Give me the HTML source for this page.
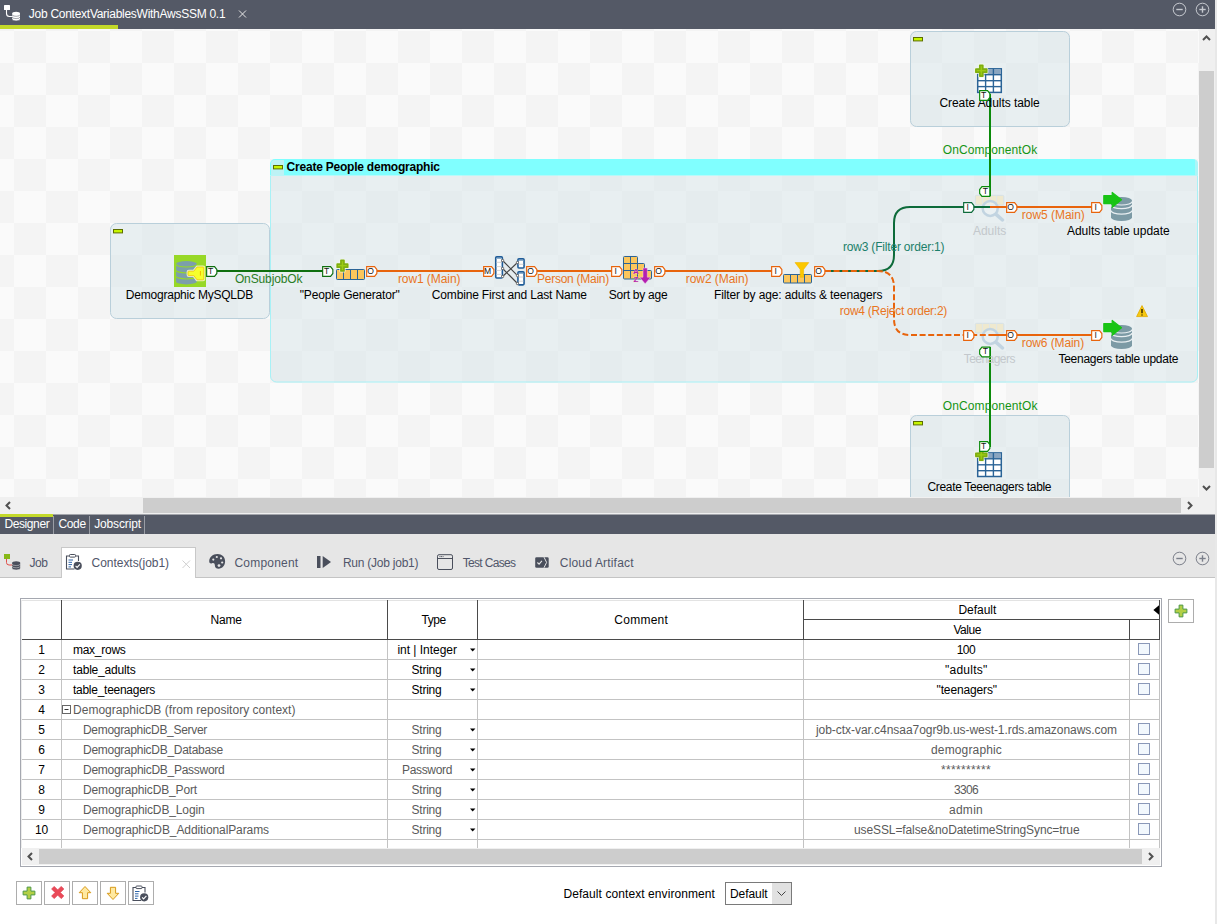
<!DOCTYPE html>
<html lang="en"><head><meta charset="utf-8"><title>Job ContextVariablesWithAwsSSM 0.1</title>
<style>
html,body{margin:0;padding:0}
body{width:1217px;height:924px;overflow:hidden;position:relative;background:#e6e6e6;font-family:"Liberation Sans", sans-serif;font-size:12px}
.t{position:absolute;white-space:pre;font-family:"Liberation Sans", sans-serif}
.abs{position:absolute}
svg{position:absolute;overflow:hidden}
svg text{font-family:"Liberation Sans", sans-serif;font-size:12px}
</style></head><body>
<div class="abs" style="left:0;top:0;width:1215px;height:29px;background:#545966"></div><div class="abs" style="left:0;top:25px;width:118px;height:4px;background:#c3d92a"></div><svg style="left:0;top:0" width="1215" height="25" viewBox="0 0 1215 25"><rect x="4" y="5" width="6" height="5" rx=".6" fill="#fff"/><path d="M6.500,10v3.500q0,3 3,3h3" stroke="#fff" stroke-width="1.1" fill="none"/><path d="M12.200,13.500v5.800a3.900,1.700 0 0 0 7.800,0v-5.800z" fill="#fff"/><ellipse cx="16.100" cy="13.500" rx="3.900" ry="1.700" fill="#fff"/><path d="M12.200,14.600a3.900,1.700 0 0 0 7.800,0M12.200,16.900a3.900,1.700 0 0 0 7.800,0M12.200,19.100a3.900,1.700 0 0 0 7.800,0" stroke="#545966" stroke-width=".7" fill="none" opacity=".75"/><path d="M239,10.500l7,7M246,10.500l-7,7" stroke="#e8e8e8" stroke-width="1"/><circle cx="1179.5" cy="9.5" r="6.3" fill="none" stroke="#c6c9cf" stroke-width="1"/><path d="M1176.3,9.5h6.4" stroke="#c6c9cf" stroke-width="1.4"/><circle cx="1202.5" cy="9.5" r="6.3" fill="none" stroke="#c6c9cf" stroke-width="1"/><path d="M1199.3,9.5h6.4" stroke="#c6c9cf" stroke-width="1.4"/><path d="M1202.5,6.3v6.4" stroke="#c6c9cf" stroke-width="1.4"/></svg><span class="t" style="left:28.8px;top:8.14px;font-size:12px;line-height:12px;color:#fff;font-weight:normal;letter-spacing:-0.269px;">Job ContextVariablesWithAwsSSM 0.1</span><svg style="left:0;top:29px" width="1199" height="468" viewBox="0 29 1199 468">
<defs><pattern id="chk" x="14" y="31" width="64" height="64" patternUnits="userSpaceOnUse"><rect width="64" height="64" fill="#fafafa"/><rect width="32" height="32" fill="#f4f4f4"/><rect x="32" y="32" width="32" height="32" fill="#f4f4f4"/></pattern></defs>
<rect x="0" y="29" width="1199" height="468" fill="url(#chk)"/>
<rect x="110.5" y="223.5" width="159" height="95" rx="6" ry="6" fill="rgba(216,229,234,.55)" stroke="#b9cfda" stroke-width="1"/>
<rect x="910.5" y="31.5" width="159" height="95" rx="6" ry="6" fill="rgba(216,229,234,.55)" stroke="#b9cfda" stroke-width="1"/>
<rect x="910.5" y="415.5" width="159" height="105" rx="6" ry="6" fill="rgba(216,229,234,.55)" stroke="#b9cfda" stroke-width="1"/>
<path d="M270,175.600V376a6.500,6.500 0 0 0 6.500,6.500H1191.5a6.500,6.500 0 0 0 6.500,-6.500V175.600z" fill="rgba(216,229,234,.55)"/>
<path d="M270.5,176V376a6,6 0 0 0 6,6H1191.5a6,6 0 0 0 6,-6V176" fill="none" stroke="#a8f1f6" stroke-width="1"/>
<path d="M270,175.600V164a5,5 0 0 1 5,-5H1193a5,5 0 0 1 5,5V175.600z" fill="#80ffff"/>
<path d="M271,175.600V164a4,4 0 0 1 4,-4H284V175.600z" fill="#bdf2f5"/><path d="M1195,160h.500a2.500,5 0 0 1 2.500,5V176h-3z" fill="#bdf2f5" opacity=".7"/>
<rect x="273.5" y="165.5" width="9" height="3.4" fill="#c6f500" stroke="#5d6e00" stroke-width="1"/>
<text x="286.6" y="171.2" textLength="153.4" lengthAdjust="spacing" fill="#000" font-weight="bold" >Create People demographic</text>
<rect x="113.5" y="229.5" width="9" height="3.4" fill="#c6f500" stroke="#5d6e00" stroke-width="1"/>
<rect x="913.5" y="37.5" width="9" height="3.4" fill="#c6f500" stroke="#5d6e00" stroke-width="1"/>
<rect x="913.5" y="421.5" width="9" height="3.4" fill="#c6f500" stroke="#5d6e00" stroke-width="1"/>
<g opacity=".5"><rect x="975.3" y="195.4" width="28.500" height="9.600" rx="1" fill="#f6e4ae" stroke="#c3d2dc" stroke-width=".9"/><path d="M982.4,195.4v9.600" stroke="#d5dfe5" stroke-width=".9"/><path d="M989.5,195.4v9.600" stroke="#d5dfe5" stroke-width=".9"/><path d="M996.5999999999999,195.4v9.600" stroke="#d5dfe5" stroke-width=".9"/><circle cx="990.1999999999999" cy="208.4" r="7.500" fill="#f2f7fa" fill-opacity=".55" stroke="#9dbbd3" stroke-width="2.500"/><path d="M996.0999999999999,214.4l6.400,5.600" stroke="#9dbbd3" stroke-width="3.400" stroke-linecap="round"/></g>
<g opacity=".5"><rect x="975.3" y="323.4" width="28.500" height="9.600" rx="1" fill="#f6e4ae" stroke="#c3d2dc" stroke-width=".9"/><path d="M982.4,323.4v9.600" stroke="#d5dfe5" stroke-width=".9"/><path d="M989.5,323.4v9.600" stroke="#d5dfe5" stroke-width=".9"/><path d="M996.5999999999999,323.4v9.600" stroke="#d5dfe5" stroke-width=".9"/><circle cx="990.1999999999999" cy="336.4" r="7.500" fill="#f2f7fa" fill-opacity=".55" stroke="#9dbbd3" stroke-width="2.500"/><path d="M996.0999999999999,342.4l6.400,5.600" stroke="#9dbbd3" stroke-width="3.400" stroke-linecap="round"/></g>
<path d="M217,271H323" stroke="#0f6f0f" stroke-width="2" fill="none"/>
<path d="M377,271H484M537,271H612M665,271H772" stroke="#e8640c" stroke-width="2" fill="none"/>
<path d="M825,271H878Q894,271 894,255V223Q894,207 910,207H990" stroke="#0d6b3a" stroke-width="2" fill="none"/>
<path d="M825,271H878Q894,271 894,287V319Q894,335 910,335H990" stroke="#e8640c" stroke-width="2" fill="none" stroke-dasharray="6,2.600"/>
<path d="M990,207H1092" stroke="#e8640c" stroke-width="2" fill="none"/>
<path d="M990,335H1092" stroke="#e8640c" stroke-width="2" fill="none"/>
<path d="M990,94V196" stroke="#0b8a0b" stroke-width="2" fill="none"/>
<path d="M990,347V447" stroke="#0b8a0b" stroke-width="2" fill="none"/>
<rect x="174" y="255" width="32" height="32" fill="#97d827"/>
<ellipse cx="186.45" cy="263.800" rx="10.35" ry="2.7" fill="#7c9faa"/>
<path d="M176.1,264.9a10.35,2.7 0 0 0 20.7,0v4.800a10.35,2.7 0 0 1 -20.7,0z" fill="#7c9faa"/>
<path d="M176.1,270.9a10.35,2.7 0 0 0 20.7,0v4.800a10.35,2.7 0 0 1 -20.7,0z" fill="#7c9faa"/>
<path d="M176.1,276.9a10.35,2.7 0 0 0 20.7,0v4.800a10.35,2.7 0 0 1 -20.7,0z" fill="#7c9faa"/>
<path d="M188.800,271.200h5l3.200,-4.200h6.200a.6,.6 0 0 1 .6,.6v11.600a.6,.6 0 0 1 -.6,.6h-6.200l-3.200,-4.200h-5a.8,.8 0 0 1 -.8,-.8v-2.800a.8,.8 0 0 1 .8,-.8z" fill="none" stroke="#fbffd8" stroke-width="2.800" stroke-linejoin="round" opacity=".8"/>
<path d="M188.800,271.200h5l3.200,-4.200h6.200a.6,.6 0 0 1 .6,.6v11.600a.6,.6 0 0 1 -.6,.6h-6.200l-3.200,-4.200h-5a.8,.8 0 0 1 -.8,-.8v-2.800a.8,.8 0 0 1 .8,-.8z" fill="#f6ff2c" stroke="#f3c400" stroke-width=".8" stroke-linejoin="round"/>
<path d="M200.400,271v4.600" stroke="#f0b800" stroke-width="1"/>
<rect x="336.5" y="269.5" width="28" height="10" rx=".8" fill="#fbc65c" stroke="#2b6497" stroke-width="1"/><path d="M343.5,269.5v10" stroke="#2b6497" stroke-width="1"/><path d="M350.5,269.5v10" stroke="#2b6497" stroke-width="1"/><path d="M357.5,269.5v10" stroke="#2b6497" stroke-width="1"/>
<path d="M340.95,260.4h3.0v3.75h3.75v3.0h-3.75v3.75h-3.0v-3.75h-3.75v-3.0h3.75z" fill="none" stroke="#f3f9e6" stroke-width="3.400" stroke-linejoin="round" opacity=".8"/><path d="M340.95,260.4h3.0v3.75h3.75v3.0h-3.75v3.75h-3.0v-3.75h-3.75v-3.0h3.75z" fill="#9ccc12" stroke="#7fae10" stroke-width="1.700" stroke-linejoin="round"/>
<rect x="495.75" y="256.84999999999997" width="6.60" height="21.10" rx="1" fill="#fff" stroke="#1f5c98" stroke-width="1.600"/><path d="M496.6,258.4H501.5" stroke="#8fb0cc" stroke-width="1.200"/><path d="M496.40000000000003,262.3H501.7" stroke="#cfcfcf" stroke-width=".9"/><path d="M496.40000000000003,266.6H501.7" stroke="#cfcfcf" stroke-width=".9"/><path d="M496.40000000000003,270.4H501.7" stroke="#cfcfcf" stroke-width=".9"/><path d="M496.40000000000003,274.4H501.7" stroke="#cfcfcf" stroke-width=".9"/>
<rect x="517.9499999999999" y="258.84999999999997" width="6.10" height="9.10" rx="1" fill="#fff" stroke="#1f5c98" stroke-width="1.600"/><path d="M518.8,260.4H523.2" stroke="#8fb0cc" stroke-width="1.200"/><path d="M518.5999999999999,264.3H523.4000000000001" stroke="#cfcfcf" stroke-width=".9"/>
<rect x="517.9499999999999" y="271.84999999999997" width="6.10" height="13.00" rx="1" fill="#fff" stroke="#1f5c98" stroke-width="1.600"/><path d="M518.8,273.4H523.2" stroke="#8fb0cc" stroke-width="1.200"/><path d="M518.5999999999999,277H523.4000000000001" stroke="#cfcfcf" stroke-width=".9"/><path d="M518.5999999999999,281.2H523.4000000000001" stroke="#cfcfcf" stroke-width=".9"/>
<path d="M502.600,260.500L517.500,275.600M502.600,268.500L517.500,283.500M502.600,276.500L517.500,262.500" stroke="#444" stroke-width="1.150" fill="none"/>
<rect x="501.5" y="259.4" width="2.200" height="2.200" rx=".5" fill="#fff" stroke="#666" stroke-width=".8"/>
<rect x="501.5" y="267.4" width="2.200" height="2.200" rx=".5" fill="#fff" stroke="#666" stroke-width=".8"/>
<rect x="501.5" y="275.4" width="2.200" height="2.200" rx=".5" fill="#fff" stroke="#666" stroke-width=".8"/>
<rect x="516.4" y="261.4" width="2.200" height="2.200" rx=".5" fill="#fff" stroke="#666" stroke-width=".8"/>
<rect x="516.4" y="274.5" width="2.200" height="2.200" rx=".5" fill="#fff" stroke="#666" stroke-width=".8"/>
<rect x="516.4" y="282.4" width="2.200" height="2.200" rx=".5" fill="#fff" stroke="#666" stroke-width=".8"/>
<path d="M624.500,256.500h12a1,1 0 0 1 1,1v6h6a1,1 0 0 1 1,1v6h6a1,1 0 0 1 1,1v6.500a1,1 0 0 1 -1,1h-26a1,1 0 0 1 -1,-1v-20.500a1,1 0 0 1 1,-1z" fill="#fbc65c" stroke="#2b6497" stroke-width="1"/>
<path d="M630.500,256.500v22M637.500,263.500v15M644.500,270.500v8M623.500,263.500h14M623.500,270.500h21" stroke="#2b6497" stroke-width="1" fill="none"/>
<path d="M643,268h4.300v9.200h3.400l-5.550,6.600 -5.550,-6.600h3.400z" fill="#b31fb0" stroke="#f3d3ee" stroke-width=".7" stroke-opacity=".7"/>
<text x="636" y="273.900" text-anchor="middle" style="font-size:8px;font-weight:bold" fill="#b31fb0" stroke="#fbe3c0" stroke-width=".5" paint-order="stroke">A</text>
<text x="636" y="281.800" text-anchor="middle" style="font-size:8px;font-weight:bold" fill="#b31fb0" stroke="#fbe3c0" stroke-width=".5" paint-order="stroke">Z</text>
<rect x="783.5" y="274.5" width="28" height="8.5" rx=".8" fill="#fbc65c" stroke="#2b6497" stroke-width="1"/><path d="M790.5,274.5v8.5" stroke="#2b6497" stroke-width="1"/><path d="M797.5,274.5v8.5" stroke="#2b6497" stroke-width="1"/><path d="M804.5,274.5v8.5" stroke="#2b6497" stroke-width="1"/>
<path d="M795,262.600h13.800l-5.200,6.800v7.800h-3.400v-7.800z" fill="#fbc800" stroke="#f2b600" stroke-width=".6" stroke-linejoin="round"/>
<path d="M1111,200.57v16.86a10.5,3.5700000000000003 0 0 0 21,0v-16.86z" fill="#7c9aa5"/><ellipse cx="1121.5" cy="200.57" rx="10.5" ry="3.5700000000000003" fill="#7c9aa5"/><path d="M1111,204.99a10.5,3.5700000000000003 0 0 0 21,0" fill="none" stroke="#e8eef1" stroke-width="1.3"/><path d="M1111,210.61a10.5,3.5700000000000003 0 0 0 21,0" fill="none" stroke="#e8eef1" stroke-width="1.3"/><path d="M1111,201.47a10.5,3.5700000000000003 0 0 0 21,0" fill="none" stroke="#e8eef1" stroke-width="1.1"/><path d="M1103.8,195.6h8.400v-3.200l9.300,7.400 -9.300,7.600v-3.800h-8.400z" fill="#19c415" stroke="#19c415" stroke-width="1.200" stroke-linejoin="round"/>
<path d="M1111,328.57v16.86a10.5,3.5700000000000003 0 0 0 21,0v-16.86z" fill="#7c9aa5"/><ellipse cx="1121.5" cy="328.57" rx="10.5" ry="3.5700000000000003" fill="#7c9aa5"/><path d="M1111,332.99a10.5,3.5700000000000003 0 0 0 21,0" fill="none" stroke="#e8eef1" stroke-width="1.3"/><path d="M1111,338.61a10.5,3.5700000000000003 0 0 0 21,0" fill="none" stroke="#e8eef1" stroke-width="1.3"/><path d="M1111,329.46999999999997a10.5,3.5700000000000003 0 0 0 21,0" fill="none" stroke="#e8eef1" stroke-width="1.1"/><path d="M1103.8,323.6h8.400v-3.200l9.300,7.400 -9.300,7.600v-3.800h-8.400z" fill="#19c415" stroke="#19c415" stroke-width="1.200" stroke-linejoin="round"/>
<path d="M1142.0,305.6L1147.5,316.6H1136.6z" fill="#f7c90f" stroke="#e0a800" stroke-width=".8" stroke-linejoin="round"/><path d="M1142.0,309v4.2M1142.0,314.4v1.2" stroke="#3a2a00" stroke-width="1.5"/>
<rect x="977.7" y="68.8" width="23.6" height="23.6" fill="#fff" stroke="#2b6497" stroke-width="1.500"/><rect x="978.2" y="69.3" width="22.6" height="5.400" fill="#8aa5c0"/><path d="M985.60,68.8v23.6" stroke="#2b6497" stroke-width="1.400"/><path d="M993.40,68.8v23.6" stroke="#2b6497" stroke-width="1.400"/><path d="M977.7,74.70h23.6" stroke="#2b6497" stroke-width="1.400"/><path d="M977.7,80.70h23.6" stroke="#2b6497" stroke-width="1.400"/><path d="M977.7,86.60h23.6" stroke="#2b6497" stroke-width="1.400"/><path d="M979.8,65.3h3.0v3.8999999999999995h3.8999999999999995v3.0h-3.8999999999999995v3.8999999999999995h-3.0v-3.8999999999999995h-3.8999999999999995v-3.0h3.8999999999999995z" fill="none" stroke="#f3f9e6" stroke-width="3.400" stroke-linejoin="round" opacity=".8"/><path d="M979.8,65.3h3.0v3.8999999999999995h3.8999999999999995v3.0h-3.8999999999999995v3.8999999999999995h-3.0v-3.8999999999999995h-3.8999999999999995v-3.0h3.8999999999999995z" fill="#9ccc12" stroke="#7fae10" stroke-width="1.700" stroke-linejoin="round"/>
<rect x="977.7" y="452.90000000000003" width="23.6" height="23.6" fill="#fff" stroke="#2b6497" stroke-width="1.500"/><rect x="978.2" y="453.40000000000003" width="22.6" height="5.400" fill="#8aa5c0"/><path d="M985.60,452.90000000000003v23.6" stroke="#2b6497" stroke-width="1.400"/><path d="M993.40,452.90000000000003v23.6" stroke="#2b6497" stroke-width="1.400"/><path d="M977.7,458.80h23.6" stroke="#2b6497" stroke-width="1.400"/><path d="M977.7,464.80h23.6" stroke="#2b6497" stroke-width="1.400"/><path d="M977.7,470.70h23.6" stroke="#2b6497" stroke-width="1.400"/><path d="M979.8,449.40000000000003h3.0v3.8999999999999995h3.8999999999999995v3.0h-3.8999999999999995v3.8999999999999995h-3.0v-3.8999999999999995h-3.8999999999999995v-3.0h3.8999999999999995z" fill="none" stroke="#f3f9e6" stroke-width="3.400" stroke-linejoin="round" opacity=".8"/><path d="M979.8,449.40000000000003h3.0v3.8999999999999995h3.8999999999999995v3.0h-3.8999999999999995v3.8999999999999995h-3.0v-3.8999999999999995h-3.8999999999999995v-3.0h3.8999999999999995z" fill="#9ccc12" stroke="#7fae10" stroke-width="1.700" stroke-linejoin="round"/>
<text x="125.8" y="298.8" textLength="127.5" lengthAdjust="spacing" fill="#000" font-weight="normal" >Demographic MySQLDB</text>
<text x="234.9" y="283" textLength="67.6" lengthAdjust="spacing" fill="#2a7d26" font-weight="normal" >OnSubjobOk</text>
<text x="299.8" y="298.8" textLength="100" lengthAdjust="spacing" fill="#000" font-weight="normal" >"People Generator"</text>
<text x="397.9" y="283" textLength="62.6" lengthAdjust="spacing" fill="#e9761f" font-weight="normal" >row1 (Main)</text>
<text x="431.8" y="298.8" textLength="155.2" lengthAdjust="spacing" fill="#000" font-weight="normal" >Combine First and Last Name</text>
<text x="537.1" y="283" textLength="72.1" lengthAdjust="spacing" fill="#e9761f" font-weight="normal" >Person (Main)</text>
<text x="608.8" y="298.8" textLength="58.8" lengthAdjust="spacing" fill="#000" font-weight="normal" >Sort by age</text>
<text x="685.8" y="283" textLength="62.7" lengthAdjust="spacing" fill="#e9761f" font-weight="normal" >row2 (Main)</text>
<text x="714" y="298.8" textLength="168.4" lengthAdjust="spacing" fill="#000" font-weight="normal" >Filter by age: adults &amp; teenagers</text>
<text x="842.9" y="251" textLength="101.7" lengthAdjust="spacing" fill="#1b7f6a" font-weight="normal" >row3 (Filter order:1)</text>
<text x="839.8" y="315" textLength="107.5" lengthAdjust="spacing" fill="#e9761f" font-weight="normal" >row4 (Reject order:2)</text>
<text x="973" y="234.8" textLength="33.2" lengthAdjust="spacing" fill="#c3c8cc" font-weight="normal" >Adults</text>
<text x="1021.8" y="219" textLength="63" lengthAdjust="spacing" fill="#e9761f" font-weight="normal" >row5 (Main)</text>
<text x="1066.9" y="234.8" textLength="102.9" lengthAdjust="spacing" fill="#000" font-weight="normal" >Adults table update</text>
<text x="942.7" y="154" textLength="94.5" lengthAdjust="spacing" fill="#149514" font-weight="normal" >OnComponentOk</text>
<text x="939.4" y="106.8" textLength="100.3" lengthAdjust="spacing" fill="#000" font-weight="normal" >Create Adults table</text>
<text x="963.7" y="362.8" textLength="51.7" lengthAdjust="spacing" fill="#c3c8cc" font-weight="normal" >Teenagers</text>
<text x="1021.8" y="347" textLength="62.4" lengthAdjust="spacing" fill="#e9761f" font-weight="normal" >row6 (Main)</text>
<text x="1058.4" y="362.8" textLength="120" lengthAdjust="spacing" fill="#000" font-weight="normal" >Teenagers table update</text>
<text x="942.8" y="410" textLength="94.7" lengthAdjust="spacing" fill="#149514" font-weight="normal" >OnComponentOk</text>
<text x="927.5" y="490.8" textLength="124" lengthAdjust="spacing" fill="#000" font-weight="normal" >Create Teeenagers table</text>
<path d="M206.65,266.65h7.900l2.300,2.900v3.900l-2.300,2.900h-7.900z" fill="#fff" stroke="#0f6f0f" stroke-width="1.150"/><text x="210.6" y="273.9" text-anchor="middle" style="font-size:8.600px" fill="#151515">T</text>
<path d="M322.65,266.65h7.900l2.300,2.900v3.900l-2.300,2.900h-7.900z" fill="#fff" stroke="#0f6f0f" stroke-width="1.150"/><text x="326.6" y="273.9" text-anchor="middle" style="font-size:8.600px" fill="#151515">T</text>
<path d="M366.65,266.65h7.900l2.300,2.900v3.900l-2.300,2.900h-7.900z" fill="#fff" stroke="#e8640c" stroke-width="1.150"/><text x="370.6" y="273.9" text-anchor="middle" style="font-size:8.600px" fill="#151515">O</text>
<path d="M483.65,266.65h7.900l2.300,2.900v3.900l-2.300,2.900h-7.900z" fill="#fff" stroke="#e8640c" stroke-width="1.150"/><text x="487.6" y="273.9" text-anchor="middle" style="font-size:8.600px" fill="#151515">M</text>
<path d="M526.65,266.65h7.900l2.300,2.900v3.900l-2.300,2.900h-7.900z" fill="#fff" stroke="#e8640c" stroke-width="1.150"/><text x="530.6" y="273.9" text-anchor="middle" style="font-size:8.600px" fill="#151515">O</text>
<path d="M611.65,266.65h7.900l2.300,2.900v3.900l-2.300,2.900h-7.900z" fill="#fff" stroke="#e8640c" stroke-width="1.150"/><text x="615.6" y="273.9" text-anchor="middle" style="font-size:8.600px" fill="#151515">I</text>
<path d="M654.65,266.65h7.900l2.300,2.900v3.900l-2.300,2.900h-7.900z" fill="#fff" stroke="#e8640c" stroke-width="1.150"/><text x="658.6" y="273.9" text-anchor="middle" style="font-size:8.600px" fill="#151515">O</text>
<path d="M771.65,266.65h7.900l2.300,2.900v3.900l-2.300,2.900h-7.900z" fill="#fff" stroke="#e8640c" stroke-width="1.150"/><text x="775.6" y="273.9" text-anchor="middle" style="font-size:8.600px" fill="#151515">I</text>
<path d="M814.65,266.65h7.900l2.300,2.900v3.900l-2.300,2.900h-7.900z" fill="#fff" stroke="#e8640c" stroke-width="1.150"/><text x="818.6" y="273.9" text-anchor="middle" style="font-size:8.600px" fill="#151515">O</text>
<path d="M963.65,202.65h7.900l2.300,2.900v3.900l-2.300,2.900h-7.900z" fill="#fff" stroke="#0d6b3a" stroke-width="1.150"/><text x="967.6" y="209.9" text-anchor="middle" style="font-size:8.600px" fill="#151515">I</text>
<path d="M1006.65,202.65h7.900l2.300,2.900v3.900l-2.300,2.900h-7.900z" fill="#fff" stroke="#e8640c" stroke-width="1.150"/><text x="1010.6" y="209.9" text-anchor="middle" style="font-size:8.600px" fill="#151515">O</text>
<path d="M1091.65,202.65h7.900l2.300,2.900v3.900l-2.300,2.900h-7.900z" fill="#fff" stroke="#e8640c" stroke-width="1.150"/><text x="1095.6" y="209.9" text-anchor="middle" style="font-size:8.600px" fill="#151515">I</text>
<path d="M963.65,330.65h7.900l2.300,2.900v3.900l-2.300,2.900h-7.900z" fill="#fff" stroke="#e8640c" stroke-width="1.150"/><text x="967.6" y="337.9" text-anchor="middle" style="font-size:8.600px" fill="#151515">I</text>
<path d="M1006.65,330.65h7.900l2.300,2.900v3.900l-2.300,2.900h-7.900z" fill="#fff" stroke="#e8640c" stroke-width="1.150"/><text x="1010.6" y="337.9" text-anchor="middle" style="font-size:8.600px" fill="#151515">O</text>
<path d="M1091.65,330.65h7.900l2.300,2.900v3.900l-2.300,2.900h-7.900z" fill="#fff" stroke="#e8640c" stroke-width="1.150"/><text x="1095.6" y="337.9" text-anchor="middle" style="font-size:8.600px" fill="#151515">I</text>
<path d="M979.65,90.65h7.900l2.300,2.900v3.900l-2.300,2.900h-7.900z" fill="#fff" stroke="#0b8a0b" stroke-width="1.150"/><text x="983.6" y="97.9" text-anchor="middle" style="font-size:8.600px" fill="#151515">T</text>
<path d="M989.85,186.65h-7.900l-2.300,2.900v3.900l2.300,2.900h7.900z" fill="#fff" stroke="#0b8a0b" stroke-width="1.150"/><text x="985.4" y="193.9" text-anchor="middle" style="font-size:8.600px" fill="#151515">T</text>
<path d="M989.85,347.15h-7.900l-2.300,2.900v3.900l2.300,2.900h7.900z" fill="#fff" stroke="#0b8a0b" stroke-width="1.150"/><text x="985.4" y="354.4" text-anchor="middle" style="font-size:8.600px" fill="#151515">T</text>
<path d="M979.65,441.65h7.900l2.300,2.900v3.900l-2.300,2.900h-7.900z" fill="#fff" stroke="#0b8a0b" stroke-width="1.150"/><text x="983.6" y="448.9" text-anchor="middle" style="font-size:8.600px" fill="#151515">T</text>
</svg>
<div class="abs" style="left:1199px;top:29px;width:16px;height:486px;background:#f0f0f0"></div><div class="abs" style="left:0;top:497px;width:1215px;height:18px;background:#f0f0f0"></div><div class="abs" style="left:1199px;top:71px;width:15px;height:397px;background:#cdcdcd"></div><div class="abs" style="left:143px;top:498px;width:1038px;height:15px;background:#cdcdcd"></div><svg style="left:0;top:29px" width="1215" height="486" viewBox="0 29 1215 486"><path d="M1203.0,40l3.5,-3.500 3.500,3.500" stroke="#505050" stroke-width="2" fill="none"/><path d="M1203.0,486l3.5,3.500 3.500,-3.500" stroke="#505050" stroke-width="2" fill="none"/><path d="M10,502.0l-3.500,3.500 3.500,3.500" stroke="#505050" stroke-width="2" fill="none"/><path d="M1188,502.0l3.500,3.500 -3.500,3.500" stroke="#505050" stroke-width="2" fill="none"/></svg><div class="abs" style="left:0;top:515px;width:1215px;height:19px;background:#545966"></div><div class="abs" style="left:53px;top:514px;width:1162px;height:1px;background:#a3a5ab"></div><div class="abs" style="left:0;top:514px;width:53px;height:3px;background:#c3d92a"></div><div class="abs" style="left:53px;top:516px;width:1px;height:18px;background:#9a9da5"></div><div class="abs" style="left:89px;top:516px;width:1px;height:18px;background:#9a9da5"></div><div class="abs" style="left:144px;top:516px;width:1px;height:18px;background:#9a9da5"></div><span class="t" style="left:4.4px;top:518.14px;font-size:12px;line-height:12px;color:#fff;font-weight:normal;letter-spacing:-0.391px;">Designer</span><span class="t" style="left:58.4px;top:518.14px;font-size:12px;line-height:12px;color:#fff;font-weight:normal;letter-spacing:-0.322px;">Code</span><span class="t" style="left:94.2px;top:518.14px;font-size:12px;line-height:12px;color:#fff;font-weight:normal;letter-spacing:-0.137px;">Jobscript</span><div class="abs" style="left:0;top:534px;width:1215px;height:43px;background:#e6e6e6"></div><div class="abs" style="left:0;top:577px;width:1215px;height:1px;background:#c4c4c4"></div><div class="abs" style="left:0;top:578px;width:1215px;height:346px;background:#fff"></div><div class="abs" style="left:61px;top:547px;width:135px;height:31px;background:#fff;border:1px solid #c8c8c8;border-bottom:none;box-sizing:border-box"></div><svg style="left:0;top:534px" width="1215" height="44" viewBox="0 534 1215 44"><rect x="4" y="554" width="6" height="5" fill="#86b817"/><path d="M6.500,559v3.500q0,2.500 2.500,2.500h3.500" stroke="#e0504a" stroke-width="1" fill="none"/><path d="M12.200,562.800v5.500a4,1.600 0 0 0 8,0v-5.500z" fill="#4a4f5c"/><ellipse cx="16.200" cy="562.800" rx="4" ry="1.600" fill="#4a4f5c"/><path d="M12.200,564a4,1.600 0 0 0 8,0M12.200,566.200a4,1.600 0 0 0 8,0M12.200,568.300a4,1.600 0 0 0 8,0" stroke="#e6e6e6" stroke-width=".6" fill="none" opacity=".8"/><path d="M69.500,556h-3v13h8" stroke="#4a4f5c" stroke-width="1.1" fill="none"/><path d="M75.500,556h3v5" stroke="#4a4f5c" stroke-width="1.100" fill="none"/><rect x="69.500" y="554.500" width="6" height="2.600" rx=".8" fill="#fff" stroke="#4a4f5c" stroke-width="1"/><path d="M68.500,560h4.500M68.500,562.300h3.500M68.500,564.600h3.500M68.500,566.900h2.500" stroke="#2a62a8" stroke-width="1"/><circle cx="77.700" cy="565.800" r="4.100" fill="#4a4f5c"/><path d="M75.600,565.900l1.500,1.500 2.800,-3" stroke="#fff" stroke-width="1.100" fill="none"/><path d="M182.500,560.500l7.500,7.500M190,560.500l-7.500,7.500" stroke="#d0d0d0" stroke-width="1"/><path d="M217.500,554c-5,0 -8.300,3.400 -8.300,7.200c0,2 1.500,2.600 2.800,2c1.500,-.7 2.800,0 2.800,1.700c0,2.600 1.800,3.800 3.700,3.800c3.800,0 6.600,-3.200 6.600,-7.400c0,-4.300 -3.200,-7.300 -7.600,-7.300z" fill="#4a4f5c"/><circle cx="213.3" cy="559.6" r="1.1" fill="#e6e6e6"/><circle cx="216.8" cy="557" r="1.1" fill="#e6e6e6"/><circle cx="221" cy="558.3" r="1.1" fill="#e6e6e6"/><circle cx="222.2" cy="562.5" r="1.1" fill="#e6e6e6"/><circle cx="219" cy="565.6" r="1.4" fill="#e6e6e6"/><rect x="317" y="556" width="3.500" height="12" fill="#4a4f5c"/><path d="M322.700,556l8.300,6 -8.300,6z" fill="#4a4f5c"/><rect x="437.500" y="554.700" width="15" height="14.800" rx="1.500" fill="none" stroke="#4a4f5c" stroke-width="1"/><path d="M437.500,558.500h15" stroke="#4a4f5c" stroke-width="1"/><path d="M439.500,556.600h4" stroke="#4a4f5c" stroke-width="1" stroke-dasharray="1,.6"/><rect x="535.200" y="557.200" width="13.500" height="10.500" rx="1.300" fill="#4a4f5c"/><path d="M537.400,562.500l1.700,1.700 2.800,-3.300" stroke="#e6e6e6" stroke-width="1.100" fill="none"/><path d="M544,557.200l2.600,5.200 -2.600,5.300" stroke="#e6e6e6" stroke-width="1" fill="none"/><circle cx="1179.5" cy="558.5" r="6.3" fill="none" stroke="#7b7f8a" stroke-width="1"/><path d="M1176.3,558.5h6.4" stroke="#7b7f8a" stroke-width="1.4"/><circle cx="1202.5" cy="558.5" r="6.3" fill="none" stroke="#7b7f8a" stroke-width="1"/><path d="M1199.3,558.5h6.4" stroke="#7b7f8a" stroke-width="1.4"/><path d="M1202.5,555.3v6.4" stroke="#7b7f8a" stroke-width="1.4"/></svg><span class="t" style="left:29.6px;top:556.84px;font-size:12px;line-height:12px;color:#51566a;font-weight:normal;letter-spacing:-0.553px;">Job</span><span class="t" style="left:91.6px;top:556.84px;font-size:12px;line-height:12px;color:#51566a;font-weight:normal;letter-spacing:-0.046px;">Contexts(job1)</span><span class="t" style="left:234.5px;top:556.84px;font-size:12px;line-height:12px;color:#51566a;font-weight:normal;letter-spacing:0.195px;">Component</span><span class="t" style="left:342.9px;top:556.84px;font-size:12px;line-height:12px;color:#51566a;font-weight:normal;letter-spacing:-0.237px;">Run (Job job1)</span><span class="t" style="left:462.7px;top:556.84px;font-size:12px;line-height:12px;color:#51566a;font-weight:normal;letter-spacing:-0.666px;">Test Cases</span><span class="t" style="left:559.8px;top:556.84px;font-size:12px;line-height:12px;color:#51566a;font-weight:normal;letter-spacing:0.180px;">Cloud Artifact</span><div class="abs" style="left:20px;top:598px;width:1142px;height:269px;border:1px solid #a5a8b0;box-sizing:border-box;background:#fff"></div><div class="abs" style="left:22px;top:600px;width:1138px;height:1px;background:#e3e3e3"></div><div class="abs" style="left:21px;top:600px;width:1px;height:248px;background:#ececec"></div><div class="abs" style="left:61px;top:600px;width:1px;height:40px;background:#4a4a4a"></div><div class="abs" style="left:387px;top:600px;width:1px;height:40px;background:#4a4a4a"></div><div class="abs" style="left:477px;top:600px;width:1px;height:40px;background:#4a4a4a"></div><div class="abs" style="left:803px;top:600px;width:1px;height:40px;background:#4a4a4a"></div><div class="abs" style="left:1159px;top:600px;width:1px;height:40px;background:#4a4a4a"></div><div class="abs" style="left:1129px;top:619px;width:1px;height:21px;background:#4a4a4a"></div><div class="abs" style="left:22px;top:639px;width:1138px;height:1px;background:#4a4a4a"></div><div class="abs" style="left:804px;top:619px;width:356px;height:1px;background:#4a4a4a"></div><div class="abs" style="left:61px;top:640px;width:1px;height:208px;background:#c3c3c3"></div><div class="abs" style="left:387px;top:640px;width:1px;height:208px;background:#c3c3c3"></div><div class="abs" style="left:477px;top:640px;width:1px;height:208px;background:#c3c3c3"></div><div class="abs" style="left:803px;top:640px;width:1px;height:208px;background:#c3c3c3"></div><div class="abs" style="left:1129px;top:640px;width:1px;height:208px;background:#c3c3c3"></div><div class="abs" style="left:1159px;top:640px;width:1px;height:208px;background:#c3c3c3"></div><div class="abs" style="left:22px;top:659px;width:1138px;height:1px;background:#c3c3c3"></div><div class="abs" style="left:22px;top:679px;width:1138px;height:1px;background:#c3c3c3"></div><div class="abs" style="left:22px;top:699px;width:1138px;height:1px;background:#c3c3c3"></div><div class="abs" style="left:22px;top:719px;width:1138px;height:1px;background:#c3c3c3"></div><div class="abs" style="left:22px;top:739px;width:1138px;height:1px;background:#c3c3c3"></div><div class="abs" style="left:22px;top:759px;width:1138px;height:1px;background:#c3c3c3"></div><div class="abs" style="left:22px;top:779px;width:1138px;height:1px;background:#c3c3c3"></div><div class="abs" style="left:22px;top:799px;width:1138px;height:1px;background:#c3c3c3"></div><div class="abs" style="left:22px;top:819px;width:1138px;height:1px;background:#c3c3c3"></div><div class="abs" style="left:22px;top:839px;width:1138px;height:1px;background:#c3c3c3"></div><span class="t" style="left:210.5px;top:614.14px;font-size:12px;line-height:12px;color:#000;font-weight:normal;letter-spacing:-0.179px;">Name</span><span class="t" style="left:421.6px;top:614.14px;font-size:12px;line-height:12px;color:#000;font-weight:normal;letter-spacing:-0.454px;">Type</span><span class="t" style="left:614.3px;top:614.14px;font-size:12px;line-height:12px;color:#000;font-weight:normal;letter-spacing:0.255px;">Comment</span><span class="t" style="left:958.5px;top:604.14px;font-size:12px;line-height:12px;color:#000;font-weight:normal;letter-spacing:-0.047px;">Default</span><span class="t" style="left:953.4px;top:624.14px;font-size:12px;line-height:12px;color:#000;font-weight:normal;letter-spacing:-0.442px;">Value</span><svg style="left:1150px;top:602px" width="12" height="16" viewBox="1150 602 12 16"><path d="M1159,605.200v9.600l-5.600,-4.800z" fill="#000"/></svg><span class="t" style="left:38.2px;top:644.34px;font-size:12px;line-height:12px;color:#000;font-weight:normal;letter-spacing:-0.088px;">1</span><span class="t" style="left:73px;top:644.34px;font-size:12px;line-height:12px;color:#000;font-weight:normal;letter-spacing:-0.273px;">max_rows</span><span class="t" style="left:397.4px;top:644.34px;font-size:12px;line-height:12px;color:#000;font-weight:normal;letter-spacing:-0.018px;">int | Integer</span><span class="t" style="left:956.7px;top:644.34px;font-size:12px;line-height:12px;color:#000;font-weight:normal;letter-spacing:-0.577px;">100</span><span class="t" style="left:38.2px;top:664.34px;font-size:12px;line-height:12px;color:#000;font-weight:normal;letter-spacing:-0.088px;">2</span><span class="t" style="left:73px;top:664.34px;font-size:12px;line-height:12px;color:#000;font-weight:normal;letter-spacing:-0.185px;">table_adults</span><span class="t" style="left:411.5px;top:664.34px;font-size:12px;line-height:12px;color:#000;font-weight:normal;letter-spacing:-0.227px;">String</span><span class="t" style="left:945px;top:664.34px;font-size:12px;line-height:12px;color:#000;font-weight:normal;letter-spacing:0.244px;">"adults"</span><span class="t" style="left:38.2px;top:684.34px;font-size:12px;line-height:12px;color:#000;font-weight:normal;letter-spacing:-0.088px;">3</span><span class="t" style="left:73px;top:684.34px;font-size:12px;line-height:12px;color:#000;font-weight:normal;letter-spacing:-0.272px;">table_teenagers</span><span class="t" style="left:411.5px;top:684.34px;font-size:12px;line-height:12px;color:#000;font-weight:normal;letter-spacing:-0.227px;">String</span><span class="t" style="left:936.5px;top:684.34px;font-size:12px;line-height:12px;color:#000;font-weight:normal;letter-spacing:-0.128px;">"teenagers"</span><span class="t" style="left:38.2px;top:704.34px;font-size:12px;line-height:12px;color:#000;font-weight:normal;letter-spacing:-0.088px;">4</span><span class="t" style="left:73px;top:704.34px;font-size:12px;line-height:12px;color:#5a5a5a;font-weight:normal;letter-spacing:0.028px;">DemographicDB (from repository context)</span><span class="t" style="left:38.2px;top:724.34px;font-size:12px;line-height:12px;color:#000;font-weight:normal;letter-spacing:-0.088px;">5</span><span class="t" style="left:83px;top:724.34px;font-size:12px;line-height:12px;color:#5a5a5a;font-weight:normal;letter-spacing:-0.303px;">DemographicDB_Server</span><span class="t" style="left:411.5px;top:724.34px;font-size:12px;line-height:12px;color:#5a5a5a;font-weight:normal;letter-spacing:-0.227px;">String</span><span class="t" style="left:816px;top:724.34px;font-size:12px;line-height:12px;color:#5a5a5a;font-weight:normal;letter-spacing:-0.047px;">job-ctx-var.c4nsaa7ogr9b.us-west-1.rds.amazonaws.com</span><span class="t" style="left:38.2px;top:744.34px;font-size:12px;line-height:12px;color:#000;font-weight:normal;letter-spacing:-0.088px;">6</span><span class="t" style="left:83px;top:744.34px;font-size:12px;line-height:12px;color:#5a5a5a;font-weight:normal;letter-spacing:-0.277px;">DemographicDB_Database</span><span class="t" style="left:411.5px;top:744.34px;font-size:12px;line-height:12px;color:#5a5a5a;font-weight:normal;letter-spacing:-0.227px;">String</span><span class="t" style="left:931px;top:744.34px;font-size:12px;line-height:12px;color:#5a5a5a;font-weight:normal;letter-spacing:0.148px;">demographic</span><span class="t" style="left:38.2px;top:764.34px;font-size:12px;line-height:12px;color:#000;font-weight:normal;letter-spacing:-0.088px;">7</span><span class="t" style="left:83px;top:764.34px;font-size:12px;line-height:12px;color:#5a5a5a;font-weight:normal;letter-spacing:-0.268px;">DemographicDB_Password</span><span class="t" style="left:402px;top:764.34px;font-size:12px;line-height:12px;color:#5a5a5a;font-weight:normal;letter-spacing:-0.336px;">Password</span><span class="t" style="left:941px;top:764.34px;font-size:12px;line-height:12px;color:#5a5a5a;font-weight:normal;letter-spacing:0.330px;">**********</span><span class="t" style="left:38.2px;top:784.34px;font-size:12px;line-height:12px;color:#000;font-weight:normal;letter-spacing:-0.088px;">8</span><span class="t" style="left:83px;top:784.34px;font-size:12px;line-height:12px;color:#5a5a5a;font-weight:normal;letter-spacing:-0.151px;">DemographicDB_Port</span><span class="t" style="left:411.5px;top:784.34px;font-size:12px;line-height:12px;color:#5a5a5a;font-weight:normal;letter-spacing:-0.227px;">String</span><span class="t" style="left:954px;top:784.34px;font-size:12px;line-height:12px;color:#5a5a5a;font-weight:normal;letter-spacing:-0.676px;">3306</span><span class="t" style="left:38.2px;top:804.34px;font-size:12px;line-height:12px;color:#000;font-weight:normal;letter-spacing:-0.088px;">9</span><span class="t" style="left:83px;top:804.34px;font-size:12px;line-height:12px;color:#5a5a5a;font-weight:normal;letter-spacing:-0.136px;">DemographicDB_Login</span><span class="t" style="left:411.5px;top:804.34px;font-size:12px;line-height:12px;color:#5a5a5a;font-weight:normal;letter-spacing:-0.227px;">String</span><span class="t" style="left:949px;top:804.34px;font-size:12px;line-height:12px;color:#5a5a5a;font-weight:normal;letter-spacing:0.263px;">admin</span><span class="t" style="left:34.9px;top:824.34px;font-size:12px;line-height:12px;color:#000;font-weight:normal;letter-spacing:-0.080px;">10</span><span class="t" style="left:83px;top:824.34px;font-size:12px;line-height:12px;color:#5a5a5a;font-weight:normal;letter-spacing:-0.092px;">DemographicDB_AdditionalParams</span><span class="t" style="left:411.5px;top:824.34px;font-size:12px;line-height:12px;color:#5a5a5a;font-weight:normal;letter-spacing:-0.227px;">String</span><span class="t" style="left:854px;top:824.34px;font-size:12px;line-height:12px;color:#5a5a5a;font-weight:normal;letter-spacing:-0.104px;">useSSL=false&amp;noDatetimeStringSync=true</span><svg style="left:20px;top:640px" width="1142" height="208" viewBox="20 640 1142 208"><path d="M470,648.4h5.400l-2.700,3z" fill="#000"/><rect x="1138.500" y="643.5" width="11" height="11" fill="#f2f8fd" stroke="#8a98b8" stroke-width="1"/><path d="M470,668.4h5.400l-2.700,3z" fill="#000"/><rect x="1138.500" y="663.5" width="11" height="11" fill="#f2f8fd" stroke="#8a98b8" stroke-width="1"/><path d="M470,688.4h5.400l-2.700,3z" fill="#000"/><rect x="1138.500" y="683.5" width="11" height="11" fill="#f2f8fd" stroke="#8a98b8" stroke-width="1"/><rect x="62.500" y="705.5" width="8" height="8" fill="#fff" stroke="#666" stroke-width="1"/><path d="M64.500,709.5h4" stroke="#333" stroke-width="1"/><path d="M470,728.4h5.400l-2.700,3z" fill="#000"/><rect x="1138.500" y="723.5" width="11" height="11" fill="#f2f8fd" stroke="#8a98b8" stroke-width="1"/><path d="M470,748.4h5.400l-2.700,3z" fill="#000"/><rect x="1138.500" y="743.5" width="11" height="11" fill="#f2f8fd" stroke="#8a98b8" stroke-width="1"/><path d="M470,768.4h5.400l-2.700,3z" fill="#000"/><rect x="1138.500" y="763.5" width="11" height="11" fill="#f2f8fd" stroke="#8a98b8" stroke-width="1"/><path d="M470,788.4h5.400l-2.700,3z" fill="#000"/><rect x="1138.500" y="783.5" width="11" height="11" fill="#f2f8fd" stroke="#8a98b8" stroke-width="1"/><path d="M470,808.4h5.400l-2.700,3z" fill="#000"/><rect x="1138.500" y="803.5" width="11" height="11" fill="#f2f8fd" stroke="#8a98b8" stroke-width="1"/><path d="M470,828.4h5.400l-2.700,3z" fill="#000"/><rect x="1138.500" y="823.5" width="11" height="11" fill="#f2f8fd" stroke="#8a98b8" stroke-width="1"/></svg><div class="abs" style="left:22px;top:848px;width:1138px;height:17px;background:#f0f0f0"></div><div class="abs" style="left:39px;top:849px;width:1103px;height:15px;background:#cdcdcd"></div><svg style="left:20px;top:848px" width="1142" height="17" viewBox="20 848 1142 17"><path d="M32,853.0l-3.500,3.500 3.500,3.500" stroke="#505050" stroke-width="2" fill="none"/><path d="M1149,853.0l3.500,3.500 -3.500,3.500" stroke="#505050" stroke-width="2" fill="none"/></svg><div class="abs" style="left:1168px;top:599px;width:26px;height:24px;border:1px solid #adadad;box-sizing:border-box;background:#fff"></div><div class="abs" style="left:16px;top:881px;width:26px;height:24px;border:1px solid #adadad;box-sizing:border-box;background:#fff"></div><div class="abs" style="left:44px;top:881px;width:26px;height:24px;border:1px solid #adadad;box-sizing:border-box;background:#fff"></div><div class="abs" style="left:72px;top:881px;width:26px;height:24px;border:1px solid #adadad;box-sizing:border-box;background:#fff"></div><div class="abs" style="left:100px;top:881px;width:26px;height:24px;border:1px solid #adadad;box-sizing:border-box;background:#fff"></div><div class="abs" style="left:128px;top:881px;width:26px;height:24px;border:1px solid #adadad;box-sizing:border-box;background:#fff"></div><svg style="left:0;top:595px" width="1215" height="329" viewBox="0 595 1215 329"><path d="M1179.1,605.1h3.8v4.0h4.0v3.8h-4.0v4.0h-3.8v-4.0h-4.0v-3.8h4.0z" fill="#b3cf45" stroke="#4f9a4c" stroke-width="1" stroke-linejoin="round"/><path d="M27.1,887.1h3.8v4.0h4.0v3.8h-4.0v4.0h-3.8v-4.0h-4.0v-3.8h4.0z" fill="#b3cf45" stroke="#4f9a4c" stroke-width="1" stroke-linejoin="round"/><path d="M51.600,889l2.600,-2.600 3.500,3.500 3.500,-3.500 2.600,2.600 -3.500,3.500 3.500,3.500 -2.600,2.600 -3.500,-3.500 -3.500,3.500 -2.600,-2.600 3.500,-3.500z" fill="#ea4a58" stroke="#dc3a4a" stroke-width=".7" stroke-linejoin="round"/><path d="M85,886.500l5.800,6.200h-3.200v6h-5.200v-6h-3.200z" fill="#ffe9a0" stroke="#d89a1a" stroke-width="1" stroke-linejoin="round"/><path d="M113,899.500l5.800,-6.200h-3.200v-6h-5.200v6h-3.200z" fill="#ffe9a0" stroke="#d89a1a" stroke-width="1" stroke-linejoin="round"/><g transform="translate(66.5,331.5)"><path d="M69.500,556h-3v13h8" stroke="#4a4f5c" stroke-width="1.100" fill="none"/><path d="M75.500,556h3v5" stroke="#4a4f5c" stroke-width="1.100" fill="none"/><rect x="69.500" y="554.500" width="6" height="2.600" rx=".8" fill="#fff" stroke="#4a4f5c" stroke-width="1"/><path d="M68.500,560h4.500M68.500,562.300h3.500M68.500,564.600h3.500M68.500,566.900h2.500" stroke="#2a62a8" stroke-width="1"/><circle cx="77.700" cy="565.800" r="4.100" fill="#4a4f5c"/><path d="M75.600,565.900l1.500,1.500 2.800,-3" stroke="#fff" stroke-width="1.100" fill="none"/></g></svg><span class="t" style="left:563.4px;top:887.84px;font-size:12px;line-height:12px;color:#000;font-weight:normal;letter-spacing:0.081px;">Default context environment</span><div class="abs" style="left:725px;top:882px;width:67px;height:23px;border:1px solid #7a7a7a;box-sizing:border-box;background:#fff"></div><div class="abs" style="left:772px;top:883px;width:19px;height:21px;background:#e1e1e1"></div><svg style="left:772px;top:883px" width="19" height="21" viewBox="0 0 19 21"><path d="M5.500,8.500l4,4 4,-4" stroke="#444" stroke-width="1" fill="none"/></svg><span class="t" style="left:730px;top:887.84px;font-size:12px;line-height:12px;color:#000;font-weight:normal;letter-spacing:-0.076px;">Default</span><div class="abs" style="left:1215px;top:0;width:2px;height:924px;background:#e8e8e8"></div></body></html>
